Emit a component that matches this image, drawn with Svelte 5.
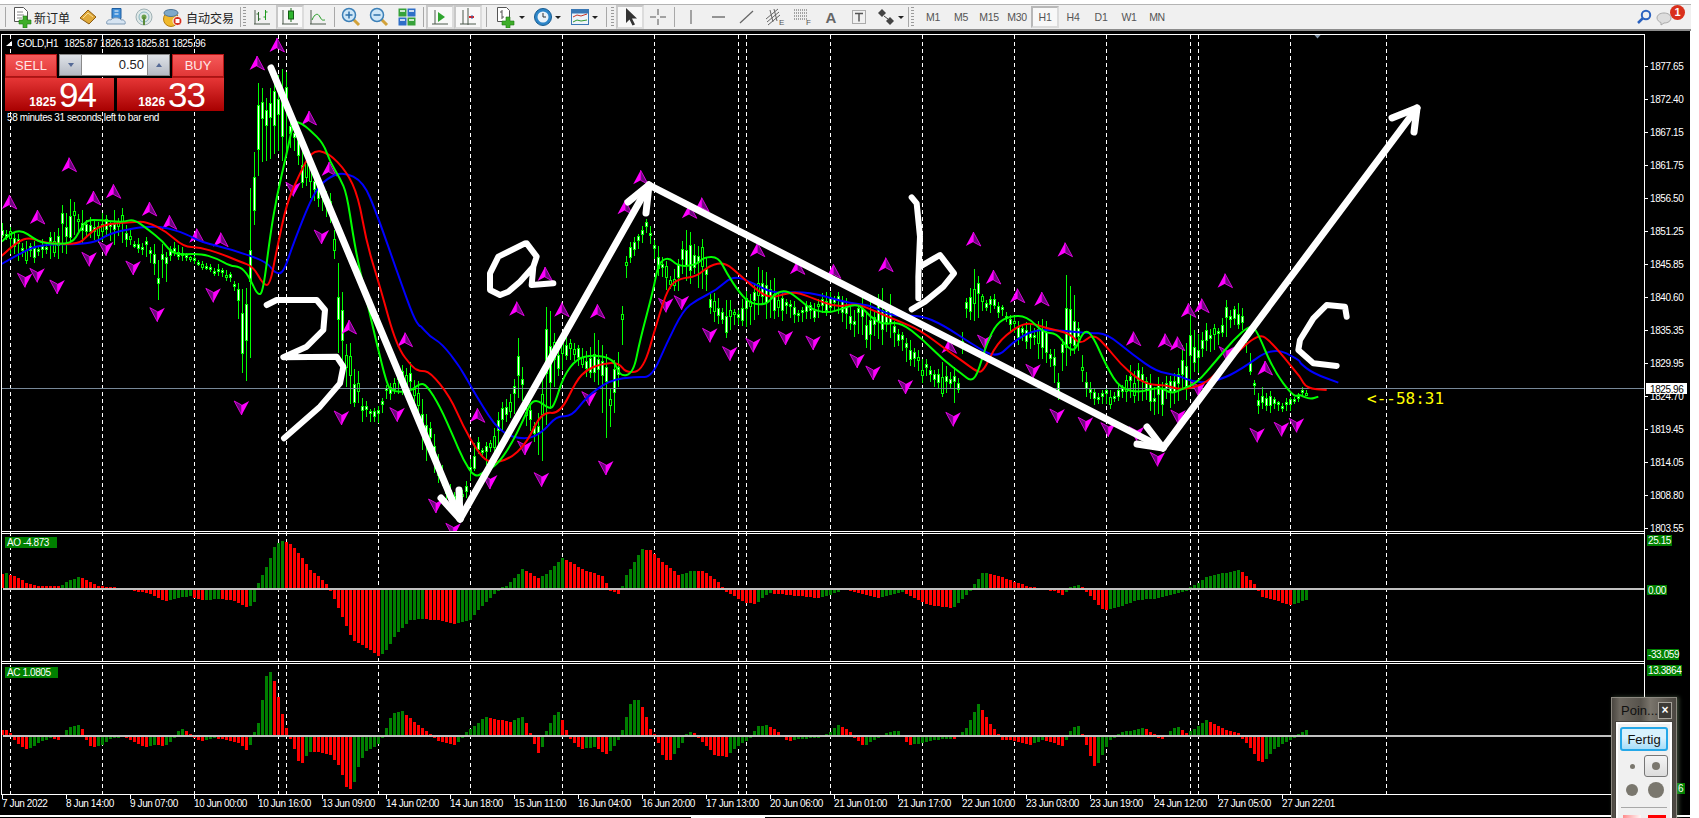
<script>
  // price and indicator traces, noted in crop coordinates of the chart
  const crop = (ox, oy, from, to, pts) =>
    pts.map(([X, Y]) => [ox + X / 3, oy + Y / 3]).filter((p) => p[0] >= from && p[0] < to);

  const trace = (a, b, c, d = []) => [
    ...crop(0, 130, 0, 420, a),
    ...crop(420, 150, 420, 800, b),
    ...crop(800, 170, 800, 1300, c),
    ...crop(1100, 260, 1300, 1400, d),
  ];

  const smooth = (pts) => {
    let d = `M${pts[0][0]} ${pts[0][1]}`;
    for (let i = 1; i < pts.length - 1; i++) {
      const mx = (pts[i][0] + pts[i + 1][0]) / 2;
      const my = (pts[i][1] + pts[i + 1][1]) / 2;
      d += `Q${pts[i][0]} ${pts[i][1]} ${mx} ${my}`;
    }
    const l = pts[pts.length - 1];
    return d + `L${l[0]} ${l[1]}`;
  };

  const lerp = (pts, x) => {
    if (x <= pts[0][0]) return pts[0][1];
    for (let i = 1; i < pts.length; i++) {
      if (x <= pts[i][0]) {
        const t = (x - pts[i - 1][0]) / (pts[i][0] - pts[i - 1][0] || 1);
        return pts[i - 1][1] + (pts[i][1] - pts[i - 1][1]) * t;
      }
    }
    return pts[pts.length - 1][1];
  };

  const green = trace(
    [[5,335],[30,310],[65,300],[100,325],[130,340],[215,343],[240,300],[260,270],[300,270],[370,277],[400,267],[440,295],[490,335],[520,375],[600,370],[650,385],[690,408],[720,410],[745,435],[775,500],[790,480],[810,320],[830,200],[860,70],[875,0],[885,-25],[905,-20],[930,0],[970,40],[990,95],[1020,145],[1040,190],[1060,320],[1075,400],[1100,510],[1130,640],[1160,760],[1175,785],[1230,785],[1265,760]],
    [[0,700],[20,705],[60,770],[100,860],[130,930],[165,985],[200,960],[230,945],[270,890],[310,810],[340,740],[390,780],[405,760],[430,680],[470,625],[520,615],[580,625],[600,680],[640,670],[660,570],[700,420],[715,340],[745,320],[775,350],[830,345],[850,322],[895,320],[920,370],[960,430],[990,460],[1040,465],[1065,430],[1100,420]],
    [[0,390],[30,415],[80,430],[130,415],[175,400],[210,440],[250,465],[300,455],[370,510],[430,570],[490,615],[510,632],[530,620],[560,520],[590,460],[630,438],[680,438],[730,488],[770,490],[800,530],[825,545],[850,482],[875,490],[920,590],[960,655],[1020,668],[1080,650],[1115,672],[1150,655],[1190,640],[1250,570],[1300,510],[1350,465],[1370,480],[1420,600],[1480,680],[1499,675]],
    [[600,405],[630,418],[655,410]]
  );
  const red = trace(
    [[5,378],[50,335],[90,322],[135,340],[235,343],[260,320],[300,285],[400,275],[440,275],[500,305],[550,350],[600,352],[660,370],[720,395],[760,410],[790,465],[810,465],[830,360],[860,220],[895,140],[935,60],[985,68],[1040,125],[1075,200],[1100,340],[1140,470],[1190,650],[1240,715],[1259,722]],
    [[0,662],[30,665],[90,740],[130,830],[170,900],[205,940],[265,930],[320,880],[365,785],[420,792],[470,690],[500,660],[540,642],[595,637],[620,670],[670,660],[710,520],[745,410],[780,385],[830,380],[870,345],[915,337],[960,375],[1010,420],[1050,445],[1110,427]],
    [[0,370],[40,385],[110,412],[170,400],[240,430],[300,455],[360,480],[440,540],[490,575],[530,605],[550,605],[590,520],[650,470],[690,458],[740,475],[810,490],[840,525],[880,490],[920,530],[960,580],[1010,625],[1050,645],[1100,645],[1140,660],[1210,645],[1260,600],[1370,490],[1410,510],[1499,620]],
    [[600,351],[620,385],[680,390]]
  );
  const blue = trace(
    [[5,402],[60,370],[120,343],[275,343],[330,310],[400,295],[440,290],[490,290],[560,312],[600,335],[700,360],[800,395],[825,430],[850,430],[880,340],[940,190],[980,145],[1030,125],[1090,155],[1130,250],[1200,450],[1240,560],[1259,590]],
    [[0,525],[30,560],[65,580],[120,650],[170,740],[240,850],[320,870],[370,845],[410,797],[455,800],[500,740],[570,690],[650,680],[695,682],[740,580],[790,480],[830,450],[890,420],[940,375],[1000,400],[1060,430]],
    [[0,365],[60,375],[150,400],[210,405],[280,440],[360,435],[430,465],[520,525],[590,565],[640,515],[700,480],[770,480],[870,490],[920,490],[1000,555],[1070,605],[1130,615],[1190,640],[1260,630],[1320,600],[1420,530],[1499,570]],
    [[600,310],[640,340],[715,368]]
  );

  const hi = trace(
    [[5,280],[30,258],[60,320],[100,330],[130,310],[165,295],[190,210],[210,150],[235,225],[260,260],[295,250],[345,230],[370,235],[400,320],[440,310],[470,330],[520,325],[560,365],[620,400],[680,400],[715,450],[740,450],[750,150],[765,0],[774,-159],[800,-150],[837,-201],[858,-180],[870,-96],[900,-30],[950,130],[990,175],[1015,405],[1050,635],[1065,690],[1090,780],[1110,830],[1135,810],[1160,760],[1215,680],[1230,690],[1259,760]],
    [[0,730],[30,790],[60,920],[90,990],[130,1000],[165,840],[190,880],[215,840],[240,750],[275,690],[295,520],[320,730],[345,790],[368,660],[380,420],[400,540],[440,560],[480,575],[535,530],[570,650],[595,590],[610,320],[630,255],[655,220],[668,190],[705,245],[720,310],[750,350],[790,250],[810,220],[830,295],[850,210],[870,390],[900,430],[935,440],[960,440],[1000,400],[1015,345],[1060,380],[1100,440]],
    [[0,400],[100,350],[150,390],[260,330],[290,450],[330,490],[400,570],[450,575],[475,600],[500,340],[520,250],[550,380],[580,360],[620,420],[660,440],[700,450],[740,430],[775,590],[800,285],[825,375],[850,570],[880,650],[940,645],[1000,550],[1040,600],[1080,620],[1135,565],[1170,430],[1215,450],[1255,450],[1280,375],[1325,400],[1345,500],[1365,620],[1395,640],[1430,690],[1470,680],[1499,660]],
    [[607,380],[620,390]]
  );
  const lo = trace(
    [[5,330],[30,385],[80,410],[130,400],[175,430],[215,345],[260,345],[320,350],[400,360],[440,400],[475,515],[520,400],[580,400],[640,450],[700,470],[728,795],[750,735],[765,220],[790,110],[870,95],[885,135],[950,260],[990,290],[1005,470],[1015,720],[1030,820],[1050,830],[1090,890],[1130,900],[1160,820],[1220,800],[1259,880]],
    [[0,900],[50,1000],[100,1100],[140,1050],[175,930],[200,950],[270,850],[300,740],[320,850],[368,950],[395,780],[440,630],[510,710],[550,835],[560,915],[595,730],[610,580],[620,360],[645,330],[680,270],[700,340],[735,440],[790,420],[850,420],[870,520],[930,575],[955,555],[1000,520],[1100,520]],
    [[0,470],[90,440],[150,490],[160,530],[220,570],[300,540],[320,610],[370,645],[420,680],[470,705],[500,465],[520,470],[550,450],[600,445],[650,530],[700,560],[775,695],[800,600],[835,590],[860,700],[900,715],[965,725],[1000,710],[1040,700],[1075,795],[1100,720],[1170,690],[1195,625],[1215,570],[1280,500],[1330,500],[1350,620],[1375,755],[1420,725],[1470,735],[1499,690]],
    [[607,410],[622,395]]
  );

  let seed = 41;
  const rnd = () => {
    seed = (seed * 16807) % 2147483647;
    return seed / 2147483647;
  };

  const candles = [];
  for (let i = 0; i <= 326; i++) {
    const x = 2 + 4 * i;
    const h = lerp(hi, x);
    const l = lerp(lo, x);
    const env = l - h;
    // a bar only fills part of the envelope, except on the big spikes
    const cut = env > 90 ? 0.15 : 0.35;
    const top = h + env * cut * rnd();
    const bot = Math.max(l - env * cut * rnd(), top + 6);
    const span = bot - top;
    const a = top + span * (0.15 + rnd() * 0.3);
    const b = Math.min(a + Math.max(span * (0.15 + rnd() * 0.35), 3), bot);
    candles.push({ x, top, bot, a, b, bull: rnd() > 0.25 });
  }

  const histogram = (pts) => {
    const bars = [];
    let prev = pts[0][1];
    for (let i = 0; i <= 326; i++) {
      const v = lerp(pts, 2 + 4 * i);
      bars.push({ x: 1 + 4 * i, v, up: v > prev });
      prev = v;
    }
    return bars;
  };
  const right = (pts) => pts.map(([X, v]) => [500 + X / 1.568, v]);

  const ao = histogram([
    [3,14],[7,15],[13,12],[20,9],[28,4],[40,2],[60,2],[68,7],[78,11],[85,9],[95,3],[105,1],[130,0],[135,-1],[150,-4],[165,-11],[178,-8],[190,-6],[200,-10],[220,-9],[235,-11],[245,-17],[252,-15],[256,-8],[258,5],[268,25],[275,44],[283,48],[290,44],[300,33],[310,18],[320,10],[326,4],[332,-4],[340,-22],[352,-50],[365,-57],[378,-66],[385,-62],[395,-45],[410,-30],[420,-29],[440,-30],[455,-34],[470,-30],[480,-18],[495,-3],[500,0],
    ...right([[10,2],[35,19],[60,10],[70,13],[97,30],[105,28],[130,18],[160,12],[170,0],[185,-4],[190,0],[197,12],[222,39],[235,38],[250,28],[280,13],[300,17],[320,17],[340,7],[350,0],[385,-13],[400,-14],[420,-3],[450,-5],[500,-8],[525,-3],[540,1],[560,-3],[590,-8],[630,-2],[670,-15],[710,-18],[735,-2],[745,5],[757,16],[790,10],[830,1],[870,-1],[880,-5],[895,1],[907,3],[918,-1],[945,-20],[960,-19],[1000,-10],[1035,-8],[1075,-1],[1090,3],[1110,12],[1160,18],[1180,6],[1195,-7],[1240,-15],[1265,-10]]),
  ]);
  const ac = histogram([
    [3,5],[7,5],[10,2],[15,-4],[22,-10],[27,-12],[31,-11],[40,-5],[50,-1],[55,-2],[60,-3],[65,4],[72,9],[79,10],[83,5],[88,-9],[95,-10],[102,-8],[112,-1],[125,0],[135,-5],[145,-10],[155,-8],[165,-9],[172,-3],[178,4],[183,6],[188,3],[192,0],[200,-4],[215,-1],[240,-6],[245,-14],[250,-8],[254,3],[258,12],[262,35],[267,65],[272,62],[277,42],[281,25],[285,9],[290,-2],[295,-15],[300,-30],[305,-20],[310,-15],[318,-15],[330,-18],[340,-30],[345,-50],[350,-52],[354,-45],[358,-30],[365,-15],[372,-11],[380,-5],[385,5],[392,22],[402,24],[415,12],[425,5],[432,0],[440,-5],[455,-8],[465,2],[475,10],[485,18],[500,15],
    ...right([[15,13],[30,18],[37,18],[45,5],[55,-10],[60,-16],[65,-12],[72,4],[85,20],[92,24],[103,5],[112,-4],[125,-12],[150,-10],[165,-18],[175,-13],[190,2],[205,33],[215,37],[225,25],[235,6],[245,-1],[255,-20],[265,-25],[275,-15],[285,-6],[295,4],[305,2],[325,-10],[335,-18],[355,-20],[370,-10],[390,-2],[405,9],[420,10],[435,3],[450,-4],[470,-2],[500,-1],[515,2],[530,10],[545,5],[555,-1],[570,-9],[590,-2],[610,3],[625,4],[640,-8],[655,-7],[680,-3],[700,-2],[715,-2],[730,6],[750,32],[765,14],[785,-3],[800,-3],[830,-8],[850,-3],[870,-6],[880,-10],[895,5],[905,11],[915,-2],[932,-30],[940,-24],[955,-3],[975,3],[1010,7],[1030,-1],[1040,-2],[1060,9],[1075,2],[1090,7],[1108,15],[1130,7],[1160,1],[1175,-10],[1190,-25],[1197,-25],[1212,-13],[1240,-2],[1258,3],[1265,6]]),
  ]);

  const ups = [
    [257,65],[277,47],[309,120],
    ...crop(0, 130, 0, 420, [[28,222],[112,267],[207,110],[280,210],[340,190],[448,243],[508,283],[590,323],[662,335],[987,123],[1047,597],[1215,635]]),
    ...crop(420, 150, 420, 800, [[662,88],[615,178],[808,190],[845,170],[1012,305],[1132,358],[290,482],[425,485],[532,490],[375,378],[172,802]]),
    ...crop(800, 170, 800, 1300, [[257,290],[100,310],[520,213],[580,327],[652,383],[725,393],[795,245],[447,535],[1000,512],[1095,518],[1132,527],[1165,427],[1205,413],[1275,338],[1395,600]]),
  ];
  const downs = [
    ...crop(0, 130, 0, 420, [[75,445],[112,430],[172,465],[268,382],[318,350],[400,408],[472,548],[640,490],[725,828],[880,172],[965,315],[1025,858],[1192,848]]),
    ...crop(420, 150, 420, 800, [[738,460],[785,452],[870,550],[930,605],[1000,580],[1097,558],[508,740],[365,983],[558,948],[315,888],[210,990],[48,1062],[100,1135]]),
    ...crop(800, 170, 800, 1300, [[40,513],[172,567],[220,603],[317,645],[460,742],[555,510],[700,598],[772,732],[857,757],[925,773],[1010,785],[1073,862],[1135,735],[1280,545],[1372,790],[1445,772],[1490,760],[1195,650]]),
  ];

  const gridX = [10,102,194,278,286,378,470,562,654,738,746,830,922,1014,1106,1190,1198,1290,1386];

  const prices = ["1877.65","1872.40","1867.15","1861.75","1856.50","1851.25","1845.85","1840.60","1835.35","1829.95","1824.70","1819.45","1814.05","1808.80","1803.55"];
  const dates = ["7 Jun 2022","8 Jun 14:00","9 Jun 07:00","10 Jun 00:00","10 Jun 16:00","13 Jun 09:00","14 Jun 02:00","14 Jun 18:00","15 Jun 11:00","16 Jun 04:00","16 Jun 20:00","17 Jun 13:00","20 Jun 06:00","21 Jun 01:00","21 Jun 17:00","22 Jun 10:00","23 Jun 03:00","23 Jun 19:00","24 Jun 12:00","27 Jun 05:00","27 Jun 22:01"];
  const periods = ["M1","M5","M15","M30","H1","H4","D1","W1","MN"];

  const pathOf = (pts) => "M" + pts.map((p) => p.join(" ")).join("L");
  const z = (ox, oy, pts) => pathOf(pts.map(([X, Y]) => [ox + X / 3, oy + Y / 3]));

  const digit3 = z(0, 130, [[800,525],[830,510],[950,510],[975,540],[970,600],[920,650],[850,682],[1010,680],[1030,710],[1020,760],[960,830],[852,925]]);
  const letterA = z(420, 150, [[315,280],[235,320],[210,370],[210,420],[240,435],[265,425],[300,395],[340,350],[350,320],[320,280]]) + z(420, 150, [[340,350],[335,405],[400,400]]);
  const letterB = z(800, 170, [[335,82],[350,100],[360,200],[355,320],[355,385]]) + z(800, 170, [[360,290],[420,255],[462,310],[430,350],[375,395],[335,418]]);
  const letterC = z(1100, 260, [[740,170],[735,140],[680,135],[640,175],[600,240],[595,270],[640,310],[710,318]]);
</script>

<div class="app">
  <header class="toolbar">
    <span class="sep first"></span>

    <button class="tool wide">
      <svg width="20" height="22" viewBox="0 0 20 22"><path d="M2.500 1.500h9l4 4v10h-13z" fill="#fff" stroke="#555"/><path d="M5 6h6M5 9h7M5 12h5" stroke="#888"/><path d="M11 10h4v4h4v4h-4v4h-4v-4H7v-4h4z" fill="#3fae2a" stroke="#1d7a12" stroke-width=".6"/></svg>
      <span class="cjk">新订单</span>
    </button>
    <button class="tool">
      <svg width="20" height="20" viewBox="0 0 20 20"><path d="M2 11 10 3l8 7-7 7z" fill="#e0a93a" stroke="#8a5a12"/><path d="M5 11l5-5 5 4" fill="none" stroke="#f8e09a"/></svg>
    </button>
    <button class="tool">
      <svg width="22" height="20" viewBox="0 0 22 20"><path d="M7 1.500h9v10H7z" fill="#3f8ed8" stroke="#1e5c9e"/><path d="M9.500 4h4M9.500 7h4" stroke="#fff"/><path d="M2 17c-1.500-3 2-5 4-4 1-3 9-3 10 0 3-1 5 2 4 4z" fill="#d6e4f2" stroke="#7f9ab5"/></svg>
    </button>
    <button class="tool">
      <svg width="20" height="20" viewBox="0 0 20 20"><circle cx="10" cy="10" r="8" fill="#dfe8e8" stroke="#9fb0b4"/><circle cx="10" cy="10" r="5" fill="none" stroke="#86b6c0"/><circle cx="10" cy="10" r="2.500" fill="#6aa04a"/><path d="M10 10v8" stroke="#5a8a3a" stroke-width="2"/></svg>
    </button>
    <button class="tool wide">
      <svg width="22" height="20" viewBox="0 0 22 20"><circle cx="9" cy="12" r="7.500" fill="#f0b92c" stroke="#b67d10"/><ellipse cx="9" cy="6" rx="7" ry="3.500" fill="#7fa9c9" stroke="#4f7596"/><circle cx="15.500" cy="14" r="4.500" fill="#d6301f" stroke="#fff"/><rect x="13.500" y="12" width="4" height="4" fill="#fff"/></svg>
      <span class="cjk">自动交易</span>
    </button>

    <span class="sep"></span><span class="grip"></span>

    <button class="tool">
      <svg width="20" height="20" viewBox="0 0 20 20"><path d="M2 17h16M3 17V3" stroke="#4d5a4d" fill="none"/><path d="M6.500 5v9M4.500 7h2M6.500 12h2" stroke="#2f6a2f" fill="none"/><path d="M13.500 3v10M11.500 10h2M13.500 5h2" stroke="#1e9a1e" fill="none"/></svg>
    </button>
    <button class="tool on">
      <svg width="20" height="20" viewBox="0 0 20 20"><path d="M2 17h16M3 17V3" stroke="#4d5a4d" fill="none"/><path d="M11 1v14" stroke="#1a6a1a"/><rect x="8.500" y="4" width="5" height="8" fill="#2fb52f" stroke="#155d15"/></svg>
    </button>
    <button class="tool">
      <svg width="20" height="20" viewBox="0 0 20 20"><path d="M2 17h16M3 17V3" stroke="#4d5a4d" fill="none"/><path d="M4 13c3-7 6-7 8-3s3 3 5 3" stroke="#1e9a1e" fill="none"/></svg>
    </button>

    <span class="sep"></span>

    <button class="tool">
      <svg width="22" height="22" viewBox="0 0 22 22"><path d="M13 13l6 6" stroke="#d2a23a" stroke-width="3"/><circle cx="9" cy="9" r="6.500" fill="#cde6f7" stroke="#3c80b8" stroke-width="1.500"/><path d="M5.500 9h7M9 5.500v7" stroke="#2c70aa" stroke-width="1.500"/></svg>
    </button>
    <button class="tool">
      <svg width="22" height="22" viewBox="0 0 22 22"><path d="M13 13l6 6" stroke="#d2a23a" stroke-width="3"/><circle cx="9" cy="9" r="6.500" fill="#cde6f7" stroke="#3c80b8" stroke-width="1.500"/><path d="M5.500 9h7" stroke="#2c70aa" stroke-width="1.500"/></svg>
    </button>
    <button class="tool">
      <svg width="20" height="20" viewBox="0 0 20 20"><rect x="1.500" y="1.500" width="8" height="8" fill="#37a23a"/><rect x="10.500" y="1.500" width="8" height="8" fill="#2f6fc8"/><rect x="1.500" y="10.500" width="8" height="8" fill="#2f6fc8"/><rect x="10.500" y="10.500" width="8" height="8" fill="#37a23a"/><path d="M3 4h5M12 4h5M3 13h5M12 13h5" stroke="#fff" stroke-width="1.500"/></svg>
    </button>

    <span class="sep"></span>

    <button class="tool on">
      <svg width="20" height="20" viewBox="0 0 20 20"><path d="M2 17h16M5 3v14" stroke="#4d5a4d" fill="none"/><path d="M8 5l7 5-7 5z" fill="#2fa52f"/></svg>
    </button>
    <button class="tool on">
      <svg width="20" height="20" viewBox="0 0 20 20"><path d="M2 17h16M5 3v14M10 1v17" stroke="#4d5a4d" fill="none"/><path d="M11 10h5" stroke="#d22" stroke-width="2"/><path d="M14 8v4" stroke="#2b5fae"/></svg>
    </button>

    <span class="sep wider"></span>

    <button class="tool drop">
      <svg width="22" height="22" viewBox="0 0 22 22"><path d="M2.500 1.500h9l3 3v11h-12z" fill="#fff" stroke="#555"/><path d="M7 4v9M5 6h2M7 11h2" stroke="#555"/><path d="M11 11h4v4h4v4h-4v3h-4v-3H7v-4h4z" fill="#3fae2a" stroke="#1d7a12" stroke-width=".6"/></svg>
      <i class="caret"></i>
    </button>
    <button class="tool drop">
      <svg width="20" height="20" viewBox="0 0 20 20"><circle cx="10" cy="10" r="8.500" fill="#2d86c9" stroke="#1a5c90"/><circle cx="10" cy="10" r="5.500" fill="#eaf2f8"/><path d="M10 6v4h3" stroke="#333" fill="none"/></svg>
      <i class="caret"></i>
    </button>
    <button class="tool drop">
      <svg width="20" height="20" viewBox="0 0 20 20"><rect x="1.500" y="2.500" width="17" height="15" fill="#eef4fa" stroke="#3a78b5"/><rect x="1.500" y="2.500" width="17" height="4" fill="#3a78b5"/><path d="M3 10l4-2 4 1 6-2" stroke="#c7372a" fill="none"/><path d="M3 15l4-2 4 1 6-1" stroke="#2f9a2f" fill="none"/></svg>
      <i class="caret"></i>
    </button>

    <span class="sep wider"></span><span class="grip"></span>

    <button class="tool on">
      <svg width="20" height="20" viewBox="0 0 20 20"><path d="M6 1v15l3.500-3.500 3 6 2.500-1-3-6h5z" fill="#333"/></svg>
    </button>
    <button class="tool">
      <svg width="20" height="20" viewBox="0 0 20 20"><path d="M10 2v6M10 12v6M2 10h6M12 10h6" stroke="#555"/></svg>
    </button>

    <span class="sep"></span>

    <button class="tool">
      <svg width="20" height="20" viewBox="0 0 20 20"><path d="M10 3v14" stroke="#555"/></svg>
    </button>
    <button class="tool">
      <svg width="20" height="20" viewBox="0 0 20 20"><path d="M3 10h13" stroke="#555" stroke-width="1.200"/></svg>
    </button>
    <button class="tool">
      <svg width="20" height="20" viewBox="0 0 20 20"><path d="M3 16 16 4" stroke="#666" stroke-width="1.200"/></svg>
    </button>
    <button class="tool">
      <svg width="22" height="20" viewBox="0 0 22 20"><path d="M2 12 14 2M3 15 15 5M4 18 16 8M6 3l3 12M10 2l3 12" stroke="#666" fill="none"/><text x="15" y="18" class="mark">E</text></svg>
    </button>
    <button class="tool">
      <svg width="22" height="20" viewBox="0 0 22 20"><path d="M2 3h13M2 6h13M2 9h13M2 12h13" stroke="#555" stroke-dasharray="1 1"/><text x="14" y="18" class="mark">F</text></svg>
    </button>
    <button class="tool"><span class="tool-a">A</span></button>
    <button class="tool">
      <svg width="20" height="20" viewBox="0 0 20 20"><rect x="3.500" y="3.500" width="13" height="13" fill="none" stroke="#666" stroke-dasharray="1 1"/><path d="M6 6.500h8M10 6.500v8" stroke="#555" stroke-width="1.500"/></svg>
    </button>
    <button class="tool drop short">
      <svg width="20" height="20" viewBox="0 0 20 20"><path d="M6 2l4 4-4 4-4-4zM14 10l4 4-4 4-4-4z" fill="#444"/><path d="M8 9l4 3" stroke="#444"/></svg>
      <i class="caret"></i>
    </button>

    <span class="sep"></span><span class="grip"></span>

    {#each periods as p}
      <button class="period" class:on={p === "H1"}>{p}</button>
    {/each}

    <div class="tray">
      <svg width="16" height="16" viewBox="0 0 16 16"><circle cx="10" cy="6" r="4.200" fill="none" stroke="#2b62c0" stroke-width="2"/><path d="M7 9l-5 5" stroke="#2b62c0" stroke-width="2.500"/></svg>
      <div class="bell">
        <svg width="16" height="14" viewBox="0 0 16 14"><path d="M1 6c0-3 3-5 7-5s7 2 7 5-3 5-7 5l-3 2v-2.500C3 10 1 8 1 6z" fill="#ddd" stroke="#aaa"/></svg>
        <span class="badge">1</span>
      </div>
    </div>
  </header>

  <main class="terminal">
    <svg class="chart" width="1690" height="787" viewBox="0 31 1690 787">
      <defs>
        <clipPath id="mainPanel"><rect x="2" y="35" width="1642" height="496" /></clipPath>
        <g id="arrowUp">
          <path d="M0-9-7.500 5 0 1z" fill="#ff00ff" />
          <path d="M0-9 7.500 5 0 1z" fill="#6a0a7a" stroke="#ff00ff" stroke-width=".8" />
        </g>
        <g id="arrowDown">
          <path d="M0 9-7.500-5 0-1z" fill="#6a0a7a" stroke="#ff00ff" stroke-width=".8" />
          <path d="M0 9 7.500-5 0-1z" fill="#ff00ff" />
        </g>
      </defs>

      <rect x="0" y="31" width="1690" height="787" fill="#000" />

      {#each gridX as x}
        <path d="M{x + 0.5} 35V794" class="grid" />
      {/each}

      <g clip-path="url(#mainPanel)">
        <g shape-rendering="crispEdges">
          {#each candles as c}
            <rect x={c.x} y={c.top} width="1" height={c.bot - c.top} fill="#00ff00" />
            <rect x={c.x - 1} y={c.a} width="3" height={c.b - c.a} fill="#00ff00" />
            <rect x={c.x} y={c.a + 1} width="1" height={Math.max(c.b - c.a - 2, 1)} fill={c.bull ? "#fff" : "#000"} />
          {/each}
        </g>

        <path d="M2 388.500H1644" class="bid" />

        {#each ups as [x, y]}
          <use href="#arrowUp" {x} {y} />
        {/each}
        {#each downs as [x, y]}
          <use href="#arrowDown" {x} {y} />
        {/each}

        <path d={smooth(blue)} class="ma" stroke="#0000ff" />
        <path d={smooth(red)} class="ma" stroke="#ff0000" />
        <path d={smooth(green)} class="ma" stroke="#00ff00" />
      </g>

      <path d="M1314 34.500h7l-3.500 4z" fill="#7f93a8" />

      <g class="ink thick">
        <path d="M271 68 460 519" />
        <path d="M441 498 460 519 459 490" />
        <path d="M460 519 649 185" />
        <path d="M628 202 649 185 646 213" />
        <path d="M649 185 1163 448" />
        <path d="M1147 427 1163 448 1137 444" />
        <path d="M1163 448 1417 108" />
        <path d="M1392 118 1417 108 1414 132" />
      </g>
      <g class="ink">
        <path d={digit3} />
        <path d={letterA} />
        <path d={letterB} />
        <path d={letterC} />
      </g>

      <text x="1367" y="404" class="timer">&lt;--58:31</text>

      <!-- indicator panels -->
      <g shape-rendering="crispEdges">
        {#each ao as b}
          <rect x={b.x} y={b.v > 0 ? 588 - b.v : 590} width="3" height={Math.abs(b.v)} fill={b.up ? "#008000" : "#ff0000"} />
        {/each}
        {#each ac as b}
          <rect x={b.x} y={b.v > 0 ? 735 - b.v : 737} width="3" height={Math.abs(b.v)} fill={b.up ? "#008000" : "#ff0000"} />
        {/each}
        <rect x="3" y="588" width="1641" height="2" fill="#c0c0c0" />
        <rect x="3" y="735" width="1641" height="2" fill="#c0c0c0" />
      </g>

      <g shape-rendering="crispEdges" fill="#fff">
        <rect x="1" y="34" width="1644" height="1" />
        <rect x="1" y="531" width="1644" height="1" />
        <rect x="1" y="533" width="1644" height="1" />
        <rect x="1" y="661" width="1644" height="1" />
        <rect x="1" y="663" width="1644" height="1" />
        <rect x="1" y="794" width="1644" height="1" />
        <rect x="1" y="34" width="1" height="761" />
        <rect x="1644" y="34" width="1" height="761" />
        <rect x="0" y="815" width="1690" height="2" />
        <rect x="691" y="815" width="74" height="3" />
      </g>

      <!-- price axis -->
      {#each prices as p, i}
        <rect x="1645" y={66 + i * 33} width="3" height="1" fill="#fff" shape-rendering="crispEdges" />
        <text x="1650" y={70 + i * 33} class="label">{p}</text>
      {/each}
      <rect x="1646" y="383" width="41" height="11" fill="#fff" />
      <text x="1650" y="392.500" class="label dark">1825.96</text>

      <rect x="1647" y="535" width="25" height="11" fill="#008000" />
      <text x="1648" y="544" class="label">25.15</text>
      <rect x="1647" y="585" width="20" height="10" fill="#008000" />
      <text x="1648" y="594" class="label">0.00</text>
      <rect x="1647" y="649" width="32" height="11" fill="#008000" />
      <text x="1648" y="658" class="label">-33.059</text>
      <rect x="1647" y="665" width="35" height="11" fill="#008000" />
      <text x="1648" y="674" class="label">13.3864</text>
      <rect x="1672" y="783" width="13" height="11" fill="#008000" />
      <text x="1678" y="792" class="label">6</text>

      <!-- time axis -->
      {#each dates as d, i}
        <rect x={2 + i * 64} y="795" width="1" height="4" fill="#fff" shape-rendering="crispEdges" />
        <text x={2 + i * 64} y="807" class="label">{d}</text>
      {/each}

      <!-- panel captions -->
      <path d="M6 46l6-5v5z" fill="#fff" />
      <text x="17" y="47" class="label">GOLD,H1</text>
      <text x="64" y="47" class="label">1825.87</text>
      <text x="100" y="47" class="label">1826.13</text>
      <text x="136" y="47" class="label">1825.81</text>
      <text x="172" y="47" class="label">1825.96</text>
      <text x="7" y="121" class="label">58 minutes 31 seconds left to bar end</text>

      <rect x="5" y="537" width="52" height="11" fill="#008000" />
      <text x="7" y="546" class="label">AO -4.873</text>
      <rect x="5" y="667" width="53" height="11" fill="#008000" />
      <text x="7" y="676" class="label">AC 1.0805</text>
    </svg>

    <div class="trade">
      <div class="deal-row">
        <button class="deal">SELL</button>
        <div class="lots">
          <button class="spin"><i class="tri down"></i></button>
          <span class="lot-value">0.50</span>
          <button class="spin"><i class="tri"></i></button>
        </div>
        <button class="deal">BUY</button>
      </div>
      <div class="quote-row">
        <div class="quote sell"><b>1825</b><span>94</span></div>
        <div class="quote buy"><b>1826</b><span>33</span></div>
      </div>
    </div>

    <div class="tool-window">
      <div class="win-title">
        <span>Poin...</span>
        <button class="win-close">×</button>
      </div>
      <div class="win-body">
        <button class="done">Fertig</button>
        <div class="dots">
          <span class="dot-cell"><i class="dot" style="--s:5px"></i></span>
          <span class="dot-cell picked"><i class="dot" style="--s:8px"></i></span>
          <span class="dot-cell"><i class="dot" style="--s:12px"></i></span>
          <span class="dot-cell"><i class="dot" style="--s:16px"></i></span>
        </div>
        <hr />
        <div class="swatches">
          <i class="swatch pink"></i>
          <i class="swatch red"></i>
        </div>
      </div>
    </div>
  </main>
</div>

<style>
  :global(body) {
    margin: 0;
    background: #fff;
    overflow: hidden;
  }
  .app {
    width: 1699px;
    height: 818px;
    overflow: hidden;
    font-family: "Liberation Sans", Arial, sans-serif;
    position: relative;
  }
  .toolbar {
    width: 1691px;
    height: 27px;
    margin-top: 4px;
    box-sizing: border-box;
    background: #f0f0f0;
    border-top: 1px solid #b4b4b4;
    border-bottom: 2px solid #8c8c8c;
    display: flex;
    align-items: center;
    padding-left: 5px;
  }
  button {
    font: inherit;
    background: none;
    border: 0;
    padding: 0;
    margin: 0;
  }
  .sep {
    width: 1px;
    height: 20px;
    background: #a8a8a8;
    margin: 0 2px;
    flex: none;
  }
  .sep.first {
    margin: 0 2px 0 0;
  }
  .sep.wider {
    margin: 0 4px;
  }
  .grip {
    width: 3px;
    height: 20px;
    margin-right: 2px;
    flex: none;
    background: repeating-linear-gradient(#9a9a9a 0 1px, transparent 1px 3px);
  }
  .tool {
    width: 28px;
    height: 24px;
    flex: none;
    display: flex;
    align-items: center;
    justify-content: center;
    box-sizing: border-box;
  }
  .tool.wide {
    width: auto;
    gap: 2px;
    padding: 0 4px;
  }
  .tool.drop {
    width: 37px;
    gap: 2px;
  }
  .tool.drop.short {
    width: 33px;
  }
  .tool.on {
    background: #f8f8f8;
    border: 2px solid #dcdcdc;
    border-top-color: #c8c8c8;
    border-left-color: #c8c8c8;
  }
  .cjk {
    font-family: "Noto Sans CJK SC", sans-serif;
    font-size: 12px;
    color: #222;
  }
  .caret {
    width: 0;
    height: 0;
    border: 3px solid transparent;
    border-top: 3px solid #222;
    margin-top: 3px;
  }
  .mark {
    font-size: 8px;
    fill: #555;
  }
  .tool-a {
    font-size: 15px;
    font-weight: 700;
    color: #666;
  }
  .period {
    width: 28px;
    height: 22px;
    flex: none;
    font-size: 10.500px;
    letter-spacing: -0.3px;
    color: #555;
    box-sizing: border-box;
  }
  .grip + .period {
    margin-left: 3px;
  }
  .period.on {
    background: #f8f8f8;
    border: 2px solid #dcdcdc;
    border-top-color: #b8b8b8;
    border-left-color: #b8b8b8;
  }
  .tray {
    margin-left: auto;
    display: flex;
    align-items: center;
    gap: 4px;
    padding-right: 5px;
  }
  .bell {
    position: relative;
    width: 30px;
    height: 18px;
    display: flex;
    align-items: flex-end;
  }
  .badge {
    position: absolute;
    right: 1px;
    top: -3px;
    width: 15px;
    height: 15px;
    border-radius: 50%;
    background: #d9301c;
    color: #fff;
    font-size: 11px;
    font-weight: 700;
    line-height: 15px;
    text-align: center;
  }
  .terminal {
    position: relative;
    width: 1690px;
    height: 787px;
    background: #000;
  }
  .chart {
    display: block;
    font-family: "Liberation Sans", Arial, sans-serif;
  }
  .grid {
    stroke: #fff;
    stroke-width: 1;
    stroke-dasharray: 4 3;
    fill: none;
    shape-rendering: crispEdges;
  }
  .bid {
    stroke: #778899;
    stroke-width: 1;
    fill: none;
  }
  .ma {
    fill: none;
    stroke-width: 2;
    stroke-linejoin: round;
  }
  .ink {
    fill: none;
    stroke: #fff;
    stroke-width: 6;
    stroke-linecap: round;
    stroke-linejoin: round;
  }
  .ink.thick {
    stroke-width: 7;
  }
  .timer {
    font-family: "DejaVu Sans Mono", monospace;
    font-size: 16px;
    fill: #ffff00;
  }
  .label {
    font-size: 10px;
    letter-spacing: -0.4px;
    fill: #fff;
  }
  .label.dark {
    fill: #000;
  }
  .trade {
    position: absolute;
    left: 5px;
    top: 23px;
    width: 219px;
  }
  .deal-row {
    display: flex;
    height: 24px;
    gap: 2px;
  }
  .deal {
    width: 52px;
    color: #ffe6e6;
    font-size: 13px;
    background: linear-gradient(#f65a5a, #e03535);
    border: 1px solid #b71515;
    box-sizing: border-box;
    box-shadow: inset 0 -1px 0 #a81515;
    padding-bottom: 2px;
  }
  .lots {
    flex: 1;
    display: flex;
    height: 22px;
    background: #8a8a8a;
    border: 1px solid #888;
    box-sizing: border-box;
  }
  .spin {
    width: 21px;
    background: linear-gradient(#dfe3e8, #b5bac4);
    display: flex;
    align-items: center;
    justify-content: center;
    flex: none;
  }
  .tri {
    width: 0;
    height: 0;
    border: 3px solid transparent;
    border-bottom: 4px solid #556a96;
    margin-bottom: 3px;
  }
  .tri.down {
    border-bottom: 3px solid transparent;
    border-top: 4px solid #556a96;
    margin: 3px 0 0;
  }
  .lot-value {
    flex: 1;
    margin: 0 1px;
    background: #fff;
    color: #222;
    font-size: 13px;
    text-align: right;
    line-height: 20px;
    padding-right: 3px;
  }
  .quote-row {
    display: flex;
    gap: 3px;
  }
  .quote {
    height: 33px;
    box-sizing: border-box;
    background: linear-gradient(#e63636, #a80000);
    color: #fff;
    display: flex;
    justify-content: flex-end;
    align-items: flex-end;
    padding-bottom: 2px;
  }
  .quote.sell {
    width: 109px;
    padding-right: 18px;
  }
  .quote.buy {
    width: 107px;
    padding-right: 19px;
  }
  .quote b {
    font-size: 12px;
    line-height: 14px;
    margin-right: 3px;
  }
  .quote span {
    font-size: 35px;
    line-height: 29px;
    letter-spacing: -1px;
  }
  .tool-window {
    position: absolute;
    left: 1611px;
    top: 666px;
    width: 66px;
    height: 130px;
    box-sizing: border-box;
    background: linear-gradient(90deg, #4a4640, #6d6860 12%, #57534c 45%, #7a756c 60%, #4a4640);
    border: 1px solid #8c8880;
    padding: 0 3px;
    box-shadow: 2px 0 4px rgba(160, 200, 150, 0.35);
  }
  .win-title {
    height: 24px;
    display: flex;
    align-items: center;
    justify-content: space-between;
    font-size: 13px;
    color: #111;
    padding-left: 6px;
  }
  .win-close {
    width: 18px;
    height: 17px;
    margin-right: 1px;
    border: 1px solid #a8a49c;
    background: #3c3a36;
    color: #fff;
    font-size: 12px;
    font-weight: 700;
    line-height: 14px;
  }
  .win-body {
    height: 110px;
    box-sizing: border-box;
    background: #f0f0f0;
    border: 2px solid #fff;
    outline: 1px solid #45423d;
    padding: 3px 2px 0;
    margin: 0 1px;
  }
  .done {
    display: block;
    width: 48px;
    height: 24px;
    margin: 0 auto;
    box-sizing: border-box;
    border: 2px solid #25a8e8;
    border-radius: 3px;
    background: linear-gradient(#d8f1fd 45%, #a6ddf8);
    color: #111;
    font-size: 13px;
  }
  .dots {
    display: grid;
    grid-template-columns: 1fr 1fr;
    grid-auto-rows: 24px;
    margin-top: 3px;
    justify-items: center;
    align-items: center;
  }
  .dot-cell {
    width: 24px;
    height: 22px;
    display: flex;
    align-items: center;
    justify-content: center;
    box-sizing: border-box;
  }
  .dot-cell.picked {
    border: 1px solid #767676;
    border-radius: 3px;
    background: linear-gradient(#f4f4f4, #dcdcdc);
  }
  .dot {
    width: var(--s);
    height: var(--s);
    border-radius: 50%;
    background: #7a776e;
  }
  hr {
    border: 0;
    height: 1px;
    background: #a8a8a8;
    margin: 5px 1px 7px;
  }
  .swatches {
    display: flex;
    justify-content: center;
    gap: 7px;
  }
  .swatch {
    width: 18px;
    height: 8px;
  }
  .swatch.pink {
    background: linear-gradient(100deg, #ff8a8a, #fff);
  }
  .swatch.red {
    background: #ff0000;
  }
</style>
